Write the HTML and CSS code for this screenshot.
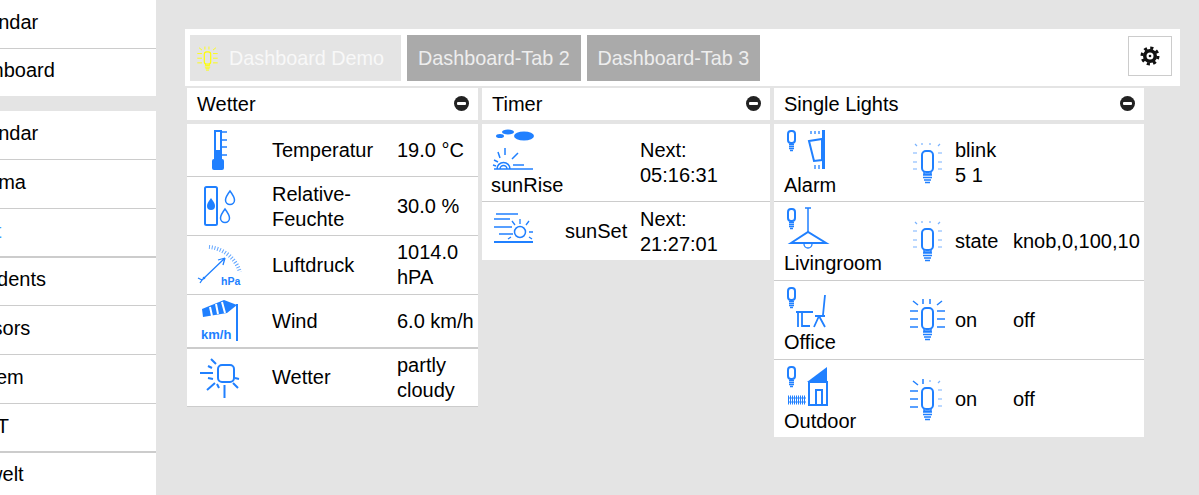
FILE: index.html
```html
<!DOCTYPE html>
<html lang="de">
<head>
<meta charset="utf-8">
<title>Dashboard</title>
<link rel="stylesheet" href="styles.css">
</head>
<body>
<svg class="defs" width="0" height="0" aria-hidden="true">
  <symbol id="bulb" viewBox="0 0 50 50" overflow="visible">
    <rect x="17" y="13" width="11" height="21" rx="4" fill="none" stroke="currentColor" stroke-width="2"/>
    <path d="M19 34v2h7v-2M18 37h9M18 39.500h9M19 42h7M20 44.500h5" fill="none" stroke="currentColor" stroke-width="1.500"/>
  </symbol>
  <symbol id="rays-l" viewBox="0 0 50 50" overflow="visible">
    <path d="M5 16h8M5 24h8M5 32h8M8 6l5 4M18 4v5" fill="none" stroke="currentColor" stroke-width="1.500"/>
  </symbol>
  <symbol id="rays-r" viewBox="0 0 50 50" overflow="visible">
    <path d="M32 16h8M32 24h8M32 32h8M37 6l-5 4M25 4v5" fill="none" stroke="currentColor" stroke-width="1.500"/>
  </symbol>
  <symbol id="rays-l-dim" viewBox="0 0 50 50" overflow="visible">
    <path d="M8 15h4M8 24h4M8 31h4M10 6l2 2M17 5v2" fill="none" stroke="currentColor" stroke-width="1.200"/>
  </symbol>
  <symbol id="rays-r-dim" viewBox="0 0 50 50" overflow="visible">
    <path d="M33 15h4M33 24h4M33 31h4M35 6l-2 2M25 5v2" fill="none" stroke="currentColor" stroke-width="1.200"/>
  </symbol>
  <symbol id="mini" viewBox="0 0 15 26">
    <rect x="4" y="3" width="7" height="12" rx="3" fill="none" stroke="currentColor" stroke-width="2"/>
    <path d="M5 16.500h5M5 18.500h5M5 20.500h5M6 22.500h3" fill="none" stroke="currentColor" stroke-width="1.300"/>
  </symbol>
</svg>

<div class="page">
  <nav class="sidebar">
    <ul class="nav-group first">
      <li class="nav-item">Calendar</li>
      <li class="nav-item last">Dashboard</li>
    </ul>
    <ul class="nav-group">
      <li class="nav-item">Calendar</li>
      <li class="nav-item">Cinema</li>
      <li class="nav-item thick active">Light</li>
      <li class="nav-item short">Residents</li>
      <li class="nav-item">Sensors</li>
      <li class="nav-item">System</li>
      <li class="nav-item thick">HEAT</li>
      <li class="nav-item tail">Umwelt</li>
    </ul>
  </nav>

  <main class="main">
    <div class="tabbar">
      <div class="tab current">
        <svg class="tab-bulb" viewBox="5 3 35 43"><use href="#bulb" width="50" height="50"/><use href="#rays-l" width="50" height="50"/><use href="#rays-r" width="50" height="50"/></svg>
        Dashboard Demo
      </div>
      <div class="tab">Dashboard-Tab 2</div>
      <div class="tab">Dashboard-Tab 3</div>
      <button class="gear-btn" type="button" aria-label="Einstellungen">
        <svg width="20" height="20" viewBox="0 0 20 20">
          <circle cx="10" cy="10" r="7" fill="#111"/>
          <circle cx="10" cy="10" r="8" fill="none" stroke="#111" stroke-width="3" stroke-dasharray="3.100 3.180"/>
          <circle cx="10" cy="10" r="3.500" fill="#fff"/>
          <circle cx="10" cy="10" r="1.300" fill="#111"/>
        </svg>
      </button>
    </div>

    <div class="panels">
      <section class="panel wetter">
        <header class="panel-head">Wetter <span class="minus"></span></header>
        <div class="panel-body">
          <div class="row w-row r53">
            <svg class="ic" viewBox="0 0 70 50"><rect x="28" y="6" width="6" height="32" fill="none" stroke="currentColor" stroke-width="2"/><rect x="27" y="25" width="8" height="14" fill="currentColor"/><rect x="25" y="34" width="12" height="11" rx="2" fill="currentColor"/><path d="M35 7h5M35 15h5M35 22h5M35 30h5" stroke="currentColor" stroke-width="1.500"/></svg>
            <div>Temperatur</div><div>19.0 °C</div>
          </div>
          <div class="row w-row r59">
            <svg class="ic" viewBox="0 0 70 50"><rect x="18" y="6" width="12" height="38" rx="1.500" fill="none" stroke="currentColor" stroke-width="2"/><path d="M24 17c3 4 4 6 4 8a4 4 0 0 1-8 0c0-2 1-4 4-8z" fill="currentColor"/><path d="M43 10c3 4 4.500 6 4.500 9a4.500 4.500 0 0 1-9 0c0-3 1.500-5 4.500-9zM38 28c3 4 4.500 6 4.500 9a4.500 4.500 0 0 1-9 0c0-3 1.500-5 4.500-9z" fill="none" stroke="currentColor" stroke-width="1.500"/></svg>
            <div class="nudge">Relative-Feuchte</div><div>30.0 %</div>
          </div>
          <div class="row w-row r59">
            <svg class="ic" viewBox="0 0 70 50"><path d="M22 7A36 36 0 0 1 53 32" fill="none" stroke="currentColor" stroke-width="4" stroke-dasharray="1 1.800" opacity=".7"/><path d="M15 40L38 18M38 18l-7 2M38 18l-2 7M15 40l-2 3M11 38l4 2" fill="none" stroke="currentColor" stroke-width="1.300"/><circle cx="17" cy="38" r="1.300" fill="currentColor"/><text class="ic-label hpa" x="34" y="45">hPa</text></svg>
            <div>Luftdruck</div><div>1014.0 hPA</div>
          </div>
          <div class="row w-row r54 thick">
            <svg class="ic" viewBox="0 0 70 50"><path d="M50 8v37" stroke="currentColor" stroke-width="2"/><path d="M15 13L37 4l13 5-10 8-24 4z" fill="currentColor"/><path d="M23 11l2 9M29 8l2 10M35 6l3 11" stroke="#fff" stroke-width="2"/><text class="ic-label" x="14" y="43">km/h</text></svg>
            <div>Wind</div><div>6.0 km/h</div>
          </div>
          <div class="row w-row r58">
            <svg class="ic" viewBox="0 0 70 50"><rect x="31" y="12" width="16" height="17" rx="4" fill="none" stroke="currentColor" stroke-width="2"/><path d="M13 20h13M20 37l8-7M37.500 32v13M24 6l5 5M21 13l4 2M21 25l5 1M30 31l2 4M46 30l5 5M48 25l4 1" fill="none" stroke="currentColor" stroke-width="2"/></svg>
            <div>Wetter</div><div>partly cloudy</div>
          </div>
        </div>
      </section>

      <section class="panel timer">
        <header class="panel-head">Timer <span class="minus"></span></header>
        <div class="panel-body">
          <div class="row t-row r78">
            <div class="stack">
              <svg class="ic-stack" viewBox="0 0 50 45"><ellipse cx="17" cy="4" rx="6" ry="2.500" fill="currentColor"/><ellipse cx="9" cy="8" rx="4" ry="2" fill="currentColor"/><ellipse cx="33" cy="8" rx="10" ry="4.500" fill="currentColor"/><path d="M3 41h39M6 41a6.500 6.500 0 0 1 13 0M9 41a3.500 3.500 0 0 1 7 0M14 20v7M27 25l-6 6M7 24l2 6M3 32l4 2M2 37l3 1M22 37h11" fill="none" stroke="currentColor" stroke-width="1.500"/></svg>
              <div class="stack-label">sunRise</div>
            </div>
            <div>Next:<br>05:16:31</div>
          </div>
          <div class="row t-row r58 plain">
            <svg class="ic-small" viewBox="0 0 50 45"><path d="M3 33h39" stroke="currentColor" stroke-width="2"/><circle cx="29" cy="23" r="5.500" fill="none" stroke="currentColor" stroke-width="1.500"/><path d="M5 5h22M3 10h16M3 18h18M8 25h14M29 10v5M38 12l-3 4M21 12l3 4M38 23h4M38 28l3 2M20 28l-3 2" fill="none" stroke="currentColor" stroke-width="1.300"/></svg>
            <div>sunSet</div>
            <div class="nudge">Next:<br>21:27:01</div>
          </div>
        </div>
      </section>

      <section class="panel lights">
        <header class="panel-head">Single Lights <span class="minus"></span></header>
        <div class="panel-body">
          <div class="row l-row r78">
            <div class="stack">
              <svg class="ic-stack" viewBox="0 0 50 45"><use href="#mini" width="15" height="26"/><path d="M39.500 2v39" stroke="currentColor" stroke-width="3"/><path d="M25 13l13-2v21l-8 1z" fill="none" stroke="currentColor" stroke-width="2"/><path d="M27 3v3M31 3v3M35 3v3M31 37v4M35 37v4" stroke="currentColor" stroke-width="1.300"/></svg>
              <div class="stack-label">Alarm</div>
            </div>
            <svg class="ic-bulb" viewBox="0 0 50 50"><use href="#bulb" width="50" height="50"/><use class="faint" href="#rays-l-dim" width="50" height="50"/><use class="faint" href="#rays-r-dim" width="50" height="50"/></svg>
            <div>blink<br>5 1</div>
            <div></div>
          </div>
          <div class="row l-row r79">
            <div class="stack">
              <svg class="ic-stack" viewBox="0 0 50 45"><use href="#mini" width="15" height="26"/><path d="M21 2h6M24 2v24" stroke="currentColor" stroke-width="1.500"/><path d="M7 37l17-11 18 11z" fill="none" stroke="currentColor" stroke-width="2"/><path d="M20 38a4 4 0 0 0 8 0" fill="none" stroke="currentColor" stroke-width="1.300"/></svg>
              <div class="stack-label">Livingroom</div>
            </div>
            <svg class="ic-bulb" viewBox="0 0 50 50"><use href="#bulb" width="50" height="50"/><use class="faint" href="#rays-l-dim" width="50" height="50"/><use class="faint" href="#rays-r-dim" width="50" height="50"/></svg>
            <div>state</div>
            <div class="nowrap">knob,0,100,10</div>
          </div>
          <div class="row l-row r79">
            <div class="stack">
              <svg class="ic-stack" viewBox="0 0 50 45"><use href="#mini" width="15" height="26"/><path d="M12 27h17M14 27v15M18 27v15M18 41h8M41 10l-2 20M31 31h10M35 31l-5 11M35 31l6 11" fill="none" stroke="currentColor" stroke-width="1.800"/></svg>
              <div class="stack-label">Office</div>
            </div>
            <svg class="ic-bulb" viewBox="0 0 50 50"><use href="#bulb" width="50" height="50"/><use href="#rays-l" width="50" height="50"/><use href="#rays-r" width="50" height="50"/></svg>
            <div>on</div>
            <div>off</div>
          </div>
          <div class="row l-row r77 plain">
            <div class="stack">
              <svg class="ic-stack" viewBox="0 0 50 45"><use href="#mini" width="15" height="26"/><path d="M23 18L43 3v15z" fill="currentColor"/><path d="M25 18h18v23H25zM32 41V26h6v15" fill="none" stroke="currentColor" stroke-width="2"/><path d="M4 36h18" stroke="currentColor" stroke-width="9" stroke-dasharray="1 1"/><path d="M4 34h18M4 38h18" stroke="currentColor" stroke-width="1"/></svg>
              <div class="stack-label">Outdoor</div>
            </div>
            <svg class="ic-bulb nudge" viewBox="0 0 50 50"><use href="#bulb" width="50" height="50"/><use href="#rays-l" width="50" height="50"/><use class="faint" href="#rays-r-dim" width="50" height="50"/></svg>
            <div class="nudge">on</div>
            <div class="nudge">off</div>
          </div>
        </div>
      </section>
    </div>
  </main>
</div>
</body>
</html>
```
FILE: styles.css
```css
* { box-sizing: border-box; }

html, body {
  margin: 0;
  height: 495px;
  overflow: hidden;
  background: #e4e4e4;
  color: #000;
  font: 20px/25px "Liberation Sans", Arial, sans-serif;
}

.defs { position: absolute; }

.page { display: flex; height: 495px; }

/* sidebar */
.sidebar {
  flex: 0 0 156px;
  overflow: hidden;
}

.nav-group {
  list-style: none;
  margin: 0 0 15px -43px;
  padding: 0;
  background: #fff;
}

.nav-item {
  height: 49px;
  line-height: 45px;
  border-bottom: 1px solid #ccc;
  white-space: nowrap;
}

.nav-item.last { height: 47px; line-height: 43px; border-bottom: 0; }
.nav-item.thick { border-bottom-width: 2px; }
.nav-item.short { height: 48px; line-height: 43px; }
.nav-item.tail { line-height: 43px; }
.nav-item.active { padding-left: 1px; color: #3a9bff; }

/* main */
.main {
  flex: 1;
  padding: 29px 19px 0 29px;
  min-width: 0;
}

.tabbar {
  display: flex;
  align-items: flex-start;
  gap: 6px;
  height: 57px;
  padding: 6px 8px 0 5px;
  background: #fff;
}

.tab {
  display: flex;
  align-items: center;
  width: 173.500px;
  height: 46px;
  padding-left: 11px;
  background: #aaa;
  color: #eee;
  font-size: 19.800px;
  white-space: nowrap;
}

.tab.current {
  width: 211px;
  padding-left: 7px;
  background: #e4e4e4;
  color: #f8f8f8;
}

.tab-bulb {
  width: 21px;
  height: 25px;
  margin-right: 11px;
  color: #ff0;
}

.gear-btn {
  display: flex;
  align-items: center;
  justify-content: center;
  width: 44px;
  height: 40px;
  margin: 1px 0 0 auto;
  padding: 0;
  background: #fff;
  border: 1px solid #ccc;
}

/* panels */
.panels {
  display: flex;
  align-items: flex-start;
  gap: 4px;
  margin: 2px 0 0 2px;
}

.wetter { width: 291px; }
.timer { width: 288px; }
.lights { width: 370px; }

.panel-head {
  display: flex;
  align-items: center;
  justify-content: space-between;
  height: 32px;
  padding: 1px 10px 0;
  margin-bottom: 4px;
  background: #fff;
}

.minus {
  position: relative;
  width: 15px;
  height: 15px;
  margin: -3px -1px 0 0;
  border-radius: 50%;
  background: #222;
}

.minus::after {
  content: "";
  position: absolute;
  left: 3px;
  top: 6px;
  width: 9px;
  height: 3px;
  border-radius: 1px;
  background: #fff;
}

.panel-body { background: #fff; }

.row {
  display: grid;
  align-items: center;
  border-bottom: 1px solid #ccc;
}

.row.plain { border-bottom: 0; }
.row.thick { border-bottom-width: 2px; }

.r53 { height: 53px; }
.r54 { height: 54px; }
.r58 { height: 58px; }
.r59 { height: 59px; }
.r77 { height: 77px; }
.r78 { height: 78px; }
.r79 { height: 79px; }

.w-row { grid-template-columns: 85px 125px 1fr; }
.t-row { grid-template-columns: 83px 75px 1fr; }
.l-row { grid-template-columns: 131px 50px 58px 1fr; }

.ic, .ic-small, .ic-bulb, .ic-stack { color: #2080ff; }

.ic { display: block; width: 70px; height: 50px; }
.ic-small { display: block; width: 50px; height: 45px; margin-left: 9px; }
.ic-bulb { display: block; width: 50px; height: 50px; }

.ic-label {
  fill: currentColor;
  font: bold 13px "Liberation Sans", Arial, sans-serif;
}

.ic-label.hpa { font-size: 10.500px; }

.stack {
  grid-column: span 2;
  align-self: start;
  padding: 4px 0 0 10px;
}

.timer .stack { padding-left: 9px; }

.l-row .stack { grid-column: span 1; }

.ic-stack { display: block; width: 50px; height: 45px; }

.stack-label { line-height: 24px; white-space: nowrap; }

.faint { opacity: .6; }

.nowrap { white-space: nowrap; }

.nudge { margin-top: 2px; }
```
